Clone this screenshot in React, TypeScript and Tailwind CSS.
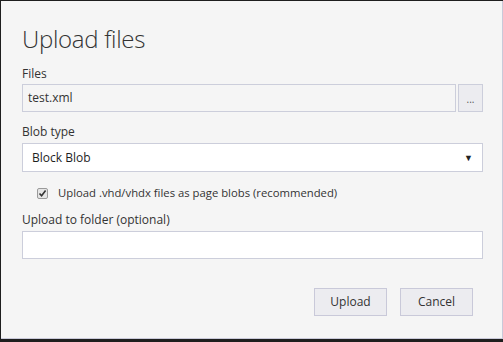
import React from "react";

export default function App() {
  return (
    <div
      className="w-[503px] h-[342px] bg-[#1e1e1e] pt-px pl-px overflow-hidden"
      style={{ fontFamily: '"Open Sans", "Noto Sans", sans-serif' }}
    >
      <div className="w-[502px] h-[338px] bg-[#f5f5f5] border-r border-b border-[#c9c9d9] flex flex-col pl-[21px] pr-[19px]">
        <h1 className="text-[24px] font-light leading-none text-[#333] mt-[26px] tracking-[-0.3px]">Upload files</h1>
        <label className="text-[12px] leading-none text-[#333] mt-[17px]">Files</label>
        <div className="flex mt-[4px] gap-[2px]">
          <div className="flex-1 h-[28px] border border-[#cccedb] bg-[#f5f5f5] flex items-center pl-[5px] text-[12px] text-[#333]">
            test.xml
          </div>
          <div className="w-[25px] h-[28px] border border-[#cccedb] bg-[#ececf0] flex items-center justify-center text-[10px] text-[#555] leading-none pt-[2px]">
            ...
          </div>
        </div>
        <label className="text-[12px] leading-none text-[#333] mt-[14px]">Blob type</label>
        <div className="mt-[5px] h-[29px] border border-[#cccedb] bg-white flex items-center justify-between pl-[9px] pr-[9px] text-[12px] text-[#1e1e1e]">
          <span>Block Blob</span>
          <span className="text-[9px] text-[#222]">▼</span>
        </div>
        <div className="flex items-center mt-[14px] ml-[15px] h-[14px]">
          <div className="w-[11px] h-[11px] border border-[#9a9a9a] bg-[#e5e5e5] rounded-[2px] flex items-center justify-center">
            <svg width="9" height="9" viewBox="0 0 9 9">
              <path d="M1.5 4.5 L3.6 6.8 L7.6 1.6" stroke="#333" strokeWidth="1.6" fill="none" />
            </svg>
          </div>
          <span className="ml-[10px] text-[11.3px] text-[#333] leading-none">Upload .vhd/vhdx files as page blobs (recommended)</span>
        </div>
        <label className="text-[12px] leading-none text-[#333] mt-[14px]">Upload to folder (optional)</label>
        <div className="mt-[5px] h-[28px] border border-[#cccedb] bg-white" />
        <div className="flex justify-end gap-[13px] mt-[29px]">
          <button className="w-[73px] h-[28px] border border-[#c9c9d9] bg-[#ececf0] text-[12px] text-[#333]">Upload</button>
          <button className="w-[73px] h-[28px] border border-[#c9c9d9] bg-[#ececf0] text-[12px] text-[#333] mr-[10px]">Cancel</button>
        </div>
      </div>
    </div>
  );
}
